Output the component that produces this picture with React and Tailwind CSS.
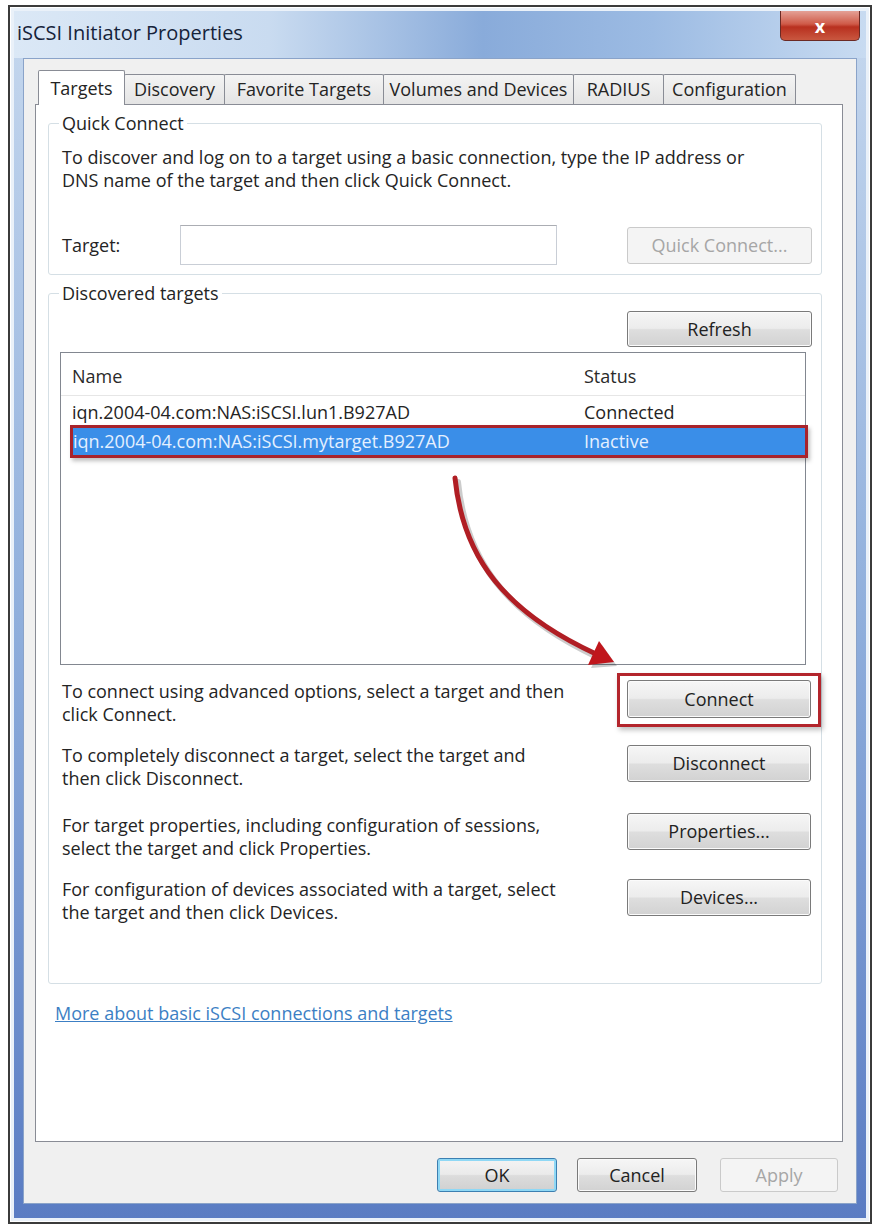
import React from "react";

const tabs = [
  { label: "Targets", w: "w-[87px]", active: true },
  { label: "Discovery", w: "w-[101px]" },
  { label: "Favorite Targets", w: "w-[160px]" },
  { label: "Volumes and Devices", w: "w-[191px]" },
  { label: "RADIUS", w: "w-[91px]" },
  { label: "Configuration", w: "w-[133px]" },
];

const actions = [
  {
    lines: ["To connect using advanced options, select a target and then", "click Connect."],
    btn: "Connect",
    row: "mt-[15px]",
    btnTop: "",
    highlight: true,
  },
  {
    lines: ["To completely disconnect a target, select the target and", "then click Disconnect."],
    btn: "Disconnect",
    row: "mt-[18px]",
    btnTop: "mt-[1px]",
  },
  {
    lines: ["For target properties, including configuration of sessions,", "select the target and click Properties."],
    btn: "Properties...",
    row: "mt-[23px]",
    btnTop: "",
    textTop: "mt-[1px]",
  },
  {
    lines: ["For configuration of devices associated with a target, select", "the target and then click Devices."],
    btn: "Devices...",
    row: "mt-[18px]",
    btnTop: "mt-[1px]",
  },
];

const Btn = ({ children, className = "", disabled = false, focus = false }) => (
  <div
    className={`flex shrink-0 items-center justify-center rounded-[3px] border ${
      disabled
        ? "border-[#cacaca] bg-[#f4f4f4] text-[#a6a6a6]"
        : focus
        ? "border-[#3c7fb1] bg-[linear-gradient(to_bottom,#f4f4f4_0%,#eaeaea_48%,#dcdcdc_52%,#d0d0d0_100%)] text-[#222] shadow-[inset_0_0_0_2px_#8fd8f5]"
        : "border-[#7a7a7a] bg-[linear-gradient(to_bottom,#f6f6f6_0%,#ececec_48%,#dedede_52%,#d2d2d2_100%)] text-[#222] shadow-[inset_0_0_0_1px_#fbfbfb]"
    } ${className}`}
  >
    {children}
  </div>
);

export default function App() {
  return (
    <div className="relative h-[1229px] w-[878px] overflow-hidden bg-white pl-[8px] pt-[5px] font-['Open_Sans',sans-serif] text-[18px] leading-[23px] text-[#242424]">
      <div className="h-[1219px] w-[864px] border-2 border-[#3b3b3b] bg-white p-px">
        {/* window frame */}
        <div className="flex h-full flex-col border-[3px] border-[#eaf1f9] bg-linear-to-b from-[#c6d8ee] via-[#90afdc] to-[#5a7cc3]">
          {/* title bar */}
          <div className="flex h-[47px] shrink-0 items-start bg-[linear-gradient(90deg,#dbe8f6_0%,#c9dbf0_30%,#89abda_55%,#9cbbe3_75%,#c8dbf1_100%)] pl-[3px] pr-[6px]">
            <span className="mt-[9px] text-[20px] leading-[26px] text-[#15233a]">iSCSI Initiator Properties</span>
            <div className="ml-auto flex h-[30px] w-[80px] items-center justify-center rounded-b-[5px] border border-t-0 border-[#6b2a24] bg-[linear-gradient(to_bottom,#e4a196_0%,#cf5a48_45%,#b8301f_55%,#c9573f_100%)] text-[18px] font-bold leading-none text-white">
              x
            </div>
          </div>

          {/* client area */}
          <div className="flex flex-1 px-[9px] pb-[14px]">
            <div className="flex flex-1 flex-col border border-[#8aa3c9] bg-[#f0f0f0] pl-[11px] pr-[13px] pt-[11px]">
              {/* Tabs */}
              <div className="relative z-10 flex h-[34px] items-end pl-[3px]">
                {tabs.map((t) =>
                  t.active ? (
                    <div
                      key={t.label}
                      className={`${t.w} -mb-px flex h-[35px] items-center justify-center rounded-t-[2px] border border-b-0 border-[#898c95] bg-white`}
                    >
                      {t.label}
                    </div>
                  ) : (
                    <div
                      key={t.label}
                      className={`${t.w} -ml-px flex h-[30px] items-center justify-center rounded-t-[2px] border border-b-0 border-[#898c95] bg-linear-to-b from-[#f4f4f4] to-[#e4e4e4]`}
                    >
                      {t.label}
                    </div>
                  )
                )}
              </div>

              {/* Tab panel */}
              <div className="flex h-[1038px] flex-col border border-[#898c95] bg-white pl-[12px] pr-[20px] pt-[8px]">
                {/* Quick Connect */}
                <fieldset className="rounded-[3px] border border-[#d5dfe5] pb-[9px] pl-[13px] pr-[9px]">
                  <legend className="-ml-[3px] px-[3px] leading-[20px]">Quick Connect</legend>
                  <p className="mt-[13px] whitespace-nowrap">
                    To discover and log on to a target using a basic connection, type the IP address or
                    <br />
                    DNS name of the target and then click Quick Connect.
                  </p>
                  <div className="mt-[33px] flex h-[40px] items-center">
                    <span className="w-[118px]">Target:</span>
                    <div className="h-[40px] w-[377px] border border-[#c9ced6] border-t-[#abadb3] bg-white" />
                    <Btn disabled className="ml-[70px] h-[37px] w-[185px]">
                      Quick Connect...
                    </Btn>
                  </div>
                </fieldset>

                {/* Discovered targets */}
                <fieldset className="mt-[8px] h-[701px] rounded-[3px] border border-[#d5dfe5] pl-[13px] pr-[9px]">
                  <legend className="-ml-[3px] px-[3px] leading-[20px]">Discovered targets</legend>
                  <div className="mt-[8px] flex justify-end">
                    <Btn className="h-[36px] w-[185px]">Refresh</Btn>
                  </div>

                  {/* list view */}
                  <div className="-ml-[2px] mt-[5px] h-[313px] w-[746px] border border-[#828790] bg-white">
                    <div className="flex h-[43px] items-center border-b border-[#e6e6e6] pl-[11px] pt-[5px] text-[#2a2a2a]">
                      <span className="w-[512px]">Name</span>
                      <span>Status</span>
                    </div>
                    <div className="flex h-[29px] items-center pl-[11px] pt-[3px]">
                      <span className="w-[512px]">iqn.2004-04.com:NAS:iSCSI.lun1.B927AD</span>
                      <span>Connected</span>
                    </div>
                    <div className="ml-[9px] w-[738px] border-[3px] border-[#a8232b] shadow-[2px_3px_4px_rgba(0,0,0,0.25)]">
                      <div className="flex h-[27px] items-center bg-[#3a8ee8] text-[#e4f0ff]">
                        <span className="w-[511px]">iqn.2004-04.com:NAS:iSCSI.mytarget.B927AD</span>
                        <span>Inactive</span>
                      </div>
                    </div>
                  </div>

                  {/* actions */}
                  {actions.map((a) => (
                    <div key={a.btn} className={`flex items-start ${a.row}`}>
                      <p className={`w-[565px] whitespace-nowrap ${a.textTop || ""}`}>
                        {a.lines[0]}
                        <br />
                        {a.lines[1]}
                      </p>
                      {a.highlight ? (
                        <div className="-mx-[10px] -mb-[9px] -mt-[7px] border-[3px] border-[#b3252c] px-[7px] pb-[6px] pt-[4px] shadow-[2px_3px_5px_rgba(0,0,0,0.25)]">
                          <Btn className="h-[38px] w-[184px]">{a.btn}</Btn>
                        </div>
                      ) : (
                        <Btn className={`h-[37px] w-[184px] ${a.btnTop}`}>{a.btn}</Btn>
                      )}
                    </div>
                  ))}
                </fieldset>

                <a className="ml-[7px] mt-[18px] self-start leading-[22px] text-[#3c7fc4] underline">
                  More about basic iSCSI connections and targets
                </a>
              </div>

              {/* dialog buttons */}
              <div className="mt-[16px] flex justify-end pr-[5px]">
                <Btn focus className="h-[34px] w-[120px]">
                  OK
                </Btn>
                <Btn className="ml-[20px] h-[34px] w-[120px]">Cancel</Btn>
                <Btn disabled className="ml-[23px] h-[34px] w-[118px]">
                  Apply
                </Btn>
              </div>
            </div>
          </div>
        </div>
      </div>

      {/* red annotation arrow */}
      <svg className="pointer-events-none absolute left-0 top-0" width="878" height="1229" viewBox="0 0 878 1229">
        <path d="M458 482 C 466 562 508 615 597 657" stroke="rgba(0,0,0,0.2)" strokeWidth="6" fill="none" strokeLinecap="round" />
        <polygon points="617,666 591,668 602,645" fill="rgba(0,0,0,0.2)" />
        <path d="M455 478 C 463 558 505 612 596 654" stroke="#b01e24" strokeWidth="5" fill="none" strokeLinecap="round" />
        <polygon points="614,662 588,665 599,641" fill="#c0161c" />
      </svg>
    </div>
  );
}
